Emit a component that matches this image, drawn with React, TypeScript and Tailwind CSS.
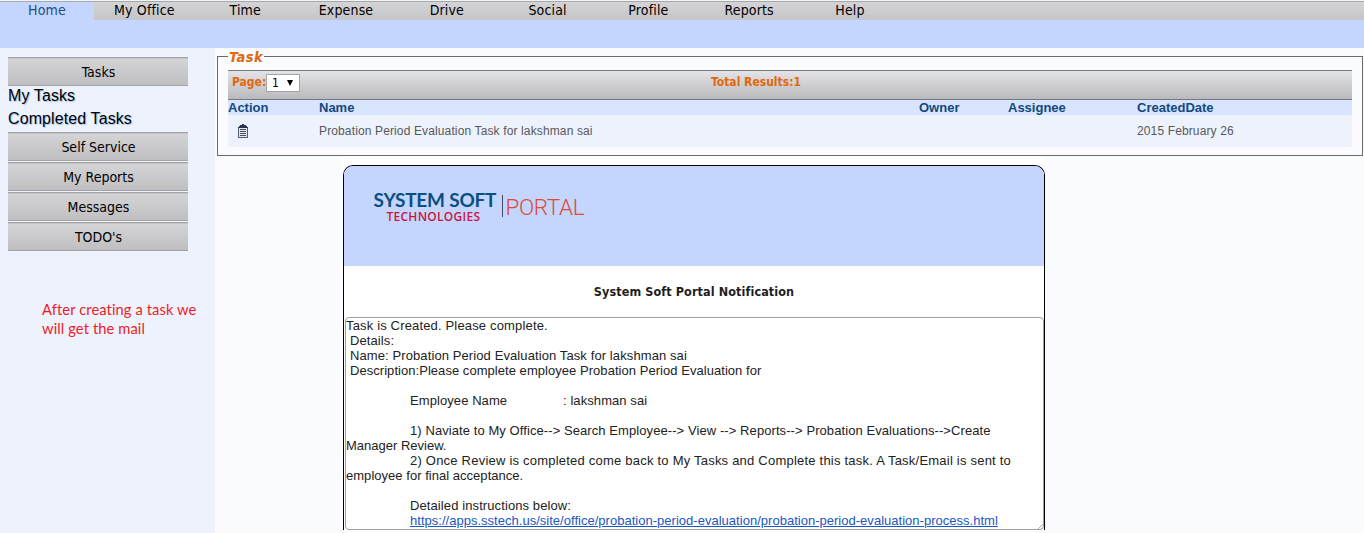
import React from "react";

const menu = ["My Office", "Time", "Expense", "Drive", "Social", "Profile", "Reports", "Help"];

const tahoma = "font-['DejaVu_Sans_Condensed','DejaVu_Sans',sans-serif] [font-stretch:condensed]";

function SideButton({ label }: { label: string }) {
  return (
    <button
      className={`${tahoma} mb-px block h-[29px] w-[180px] border-y border-[#a3a3a6] bg-linear-to-b from-[#d5d5d8] to-[#bfbfc2] pl-px pt-px text-center text-[14px] leading-[27px] text-black shadow-[inset_0_1px_0_#c4c4c6]`}
    >
      {label}
    </button>
  );
}

function ClipboardIcon() {
  return (
    <svg className="block" width="10" height="14" viewBox="0 0 10 14" shapeRendering="crispEdges">
      <path d="M1 2h8v1h1v11H0V3h1z" fill="#555b6c" />
      <path d="M1 4h8v9H1z" fill="#e4e5ea" />
      <path d="M4 0h2v1h2v1h1v1h1v1H0V3h1V2h1V1h2z" fill="#2c3550" />
      <path d="M2 5h6v1H2zM2 7h6v1H2zM2 9h6v1H2zM2 11h6v1H2z" fill="#4b5061" />
    </svg>
  );
}

function Logo() {
  return (
    <svg className="block" width="214" height="50" viewBox="0 -8 214 50">
      <text x="0.5" y="16.500" textLength="123" lengthAdjust="spacing" fontFamily="Lato, sans-serif" fontWeight="700" fontSize="19" fill="#0b4f7f">SYSTEM SOFT</text>
      <text x="13.500" y="30.500" textLength="93.500" lengthAdjust="spacing" fontFamily="'Open Sans', sans-serif" fontWeight="600" fontSize="12" fill="#c8173f">TECHNOLOGIES</text>
      <path d="M129.500 5v22" stroke="#3f4a63" />
      <text x="132.500" y="24.500" textLength="79" lengthAdjust="spacing" fontFamily="Roboto, sans-serif" fontWeight="300" fontSize="22.500" fill="#dc4a36">PORTAL</text>
    </svg>
  );
}

export default function App() {
  return (
    <div className="flex h-[533px] w-[1364px] flex-col overflow-hidden bg-[#fafbff] font-['Liberation_Sans',Arial,sans-serif]">
      <header className="h-[48px] shrink-0 bg-[#c4d6ff]">
        <div className="h-px bg-[#f2f3f5]" />
        <nav className={`${tahoma} flex h-[19px] border-t border-[#a6a9ab] bg-linear-to-b from-[#d4d4d6] to-[#c5c5c8] text-center text-[14px] leading-[17px] tracking-[0.15px] text-black`}>
          <a className="w-[94px] bg-[#c4d6ff] text-[#1b4f80]">Home</a>
          {menu.map((m) => (
            <a key={m} className="w-[100.800px]">{m}</a>
          ))}
        </nav>
      </header>

      <div className="flex min-h-0 flex-1">
        <aside className="w-[215px] shrink-0 bg-[#edf2fd] pl-2 pt-[9px]">
          <SideButton label="Tasks" />
          <ul className="text-[16px] leading-[23px] tracking-[0.1px] text-black [text-shadow:1px_1px_1px_#9cc4ee]">
            <li className="-mt-[3px]">My Tasks</li>
            <li>Completed Tasks</li>
          </ul>
          <div className="pt-[2px]">
            <SideButton label="Self Service" />
            <SideButton label="My Reports" />
            <SideButton label="Messages" />
            <SideButton label="TODO's" />
          </div>
          <p className="pl-[34px] pt-[48px] text-[14.700px] leading-[19px] tracking-[0.1px] text-[#ed1c24] font-['Lato',sans-serif]">
            After creating a task we
            <br />
            will get the mail
          </p>
        </aside>

        <main className="flex min-w-0 flex-1 flex-col pl-[2px]">
          <fieldset className="mr-px h-[108px] shrink-0 border border-[#6b6b6e] px-[10px]">
            <legend className={`${tahoma} h-[16px] px-px text-[14.500px] font-bold italic leading-[18px] tracking-[0.4px] text-[#e1670c]`}>Task</legend>
            <div className={`${tahoma} mt-[6px] flex h-[30px] border-y border-[#78787b] bg-linear-to-b from-[#e4e4e8] to-[#b9babd] pl-[4px] pt-[3px] text-[12px] font-bold leading-[16px] text-[#e1670c]`}>
              <span className="w-[34px]">Page:</span>
              <button className="flex h-[18px] w-[34px] items-center border border-[#a5a5a5] bg-white pl-[5px] text-[12px] font-normal text-black">
                <span className="w-[15px] text-left">1</span>
                <svg width="6" height="6" viewBox="0 0 6 6"><path d="M0 0h6L3 6z" fill="#000" /></svg>
              </button>
              <span className="pl-[411px]">Total Results:1</span>
            </div>
            <div className="grid h-[15px] grid-cols-[91px_600px_89px_129px_1fr] bg-[#d9e5fe] text-[13px] font-bold leading-[15px] text-[#12497f]">
              <span>Action</span>
              <span>Name</span>
              <span>Owner</span>
              <span>Assignee</span>
              <span>CreatedDate</span>
            </div>
            <div className="grid h-[32px] grid-cols-[91px_600px_89px_129px_1fr] items-center bg-[#edf2fd] text-[12px] tracking-[0.130px] text-[#58585c]">
              <span className="pl-[10px]"><ClipboardIcon /></span>
              <span>Probation Period Evaluation Task for lakshman sai</span>
              <span />
              <span />
              <span>2015 February 26</span>
            </div>
          </fieldset>

          <section className="ml-[124px] h-[374px] w-[704px] shrink-0 bg-white pl-[2px] pt-[9px]">
            <div className="flex h-[365px] w-[702px] flex-col overflow-hidden rounded-t-[10px] border border-b-0 border-black bg-white">
              <div className="h-[100px] shrink-0 bg-[#c4d6ff] pl-[29px] pt-[16px]">
                <Logo />
              </div>
              <h1 className={`${tahoma} h-[51px] shrink-0 text-center text-[12.500px] font-bold leading-[51px] tracking-[0.1px] text-[#1d1d1d]`}>
                System Soft Portal Notification
              </h1>
              <div className="relative ml-px h-[213px] shrink-0 overflow-hidden whitespace-pre rounded-[4px] border border-[#a0a0a0] text-[13px] leading-[15px] text-[#222]">
                <p className="tracking-[0.160px]">Task is Created. Please complete.</p>
                <p className="pl-[4px] tracking-[0.1px]">Details:</p>
                <p className="pl-[4px] tracking-[0.1px]">Name: Probation Period Evaluation Task for lakshman sai</p>
                <p className="pl-[4px] tracking-[0.045px]">Description:Please complete employee Probation Period Evaluation for</p>
                <p className="flex pl-[64px] pt-[15px] tracking-[0.080px]">
                  <span className="w-[153px]">Employee Name</span>
                  <span>: lakshman sai</span>
                </p>
                <p className="pl-[64px] pt-[15px] tracking-[0.080px]">1) Naviate to My Office--&gt; Search Employee--&gt; View --&gt; Reports--&gt; Probation Evaluations--&gt;Create</p>
                <p>Manager Review.</p>
                <p className="pl-[64px] tracking-[0.220px]">2) Once Review is completed come back to My Tasks and Complete this task. A Task/Email is sent to</p>
                <p className="tracking-[0.030px]">employee for final acceptance.</p>
                <p className="pl-[64px] pt-[15px] tracking-[0.1px]">Detailed instructions below:</p>
                <p className="pl-[64px] tracking-[0.020px]">
                  <a className="text-[#1a56c4] underline">https://apps.sstech.us/site/office/probation-period-evaluation/probation-period-evaluation-process.html</a>
                </p>
                <svg className="absolute bottom-0 right-0" width="5" height="5" viewBox="0 0 5 5"><path d="M0 5l5-5M3 5l2-2" stroke="#999" strokeWidth=".8" /></svg>
              </div>
            </div>
          </section>
        </main>
      </div>
    </div>
  );
}
